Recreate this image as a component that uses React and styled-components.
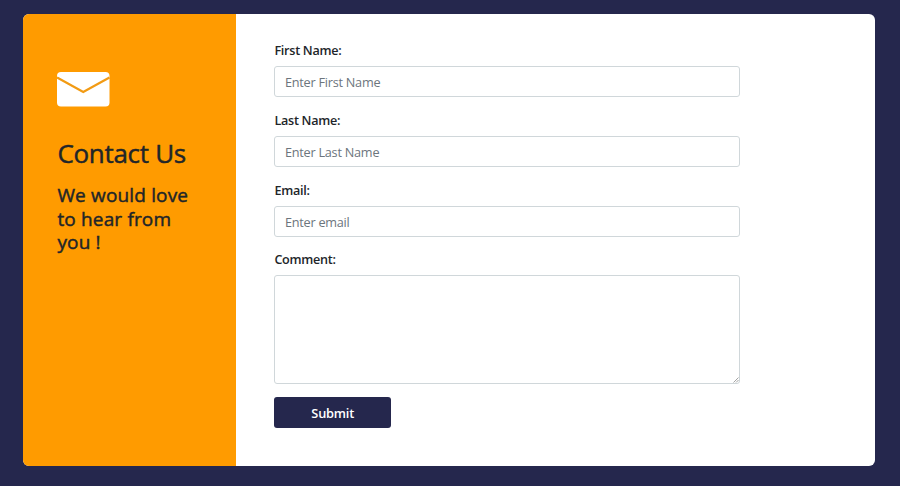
import React from "react";
import styled, { createGlobalStyle } from "styled-components";

const GlobalStyle = createGlobalStyle`
  *, *::before, *::after { box-sizing: border-box; }
  body {
    margin: 0;
    background: #25274d;
    font-family: "Open Sans", "Noto Sans", sans-serif;
    color: #212529;
    overflow: hidden;
  }
`;

const Page = styled.main`
  height: 486px;
  padding: 14px 25px 20px 23.4px;
  background: #25274d;
`;

const Card = styled.section`
  display: grid;
  grid-template-columns: 213px 1fr;
  height: 452px;
  border-radius: 6px;
  overflow: hidden;
  background: #fff;
`;

const Aside = styled.aside`
  padding: 58px 34px 0;
  background: #ff9b00;
`;

const Envelope = styled.svg`
  display: block;
  width: 52.5px;
  height: 35px;
`;

const Title = styled.h2`
  margin: 29px 0 0;
  font-size: 26px;
  line-height: 34px;
  font-weight: 400;
  letter-spacing: -0.3px;
  -webkit-text-stroke: 0.45px currentColor;
  white-space: nowrap;
`;

const Tagline = styled.h4`
  margin: 14px 0 0;
  font-size: 19px;
  line-height: 23.5px;
  font-weight: 400;
  letter-spacing: 0.16px;
  -webkit-text-stroke: 0.45px currentColor;
  white-space: nowrap;
`;

const Form = styled.form`
  display: flex;
  flex-direction: column;
  align-items: flex-start;
  width: 504px;
  padding: 27px 0 0 38px;
`;

const Field = styled.div`
  position: relative;
  display: flex;
  flex-direction: column;
  width: 465.6px;
  height: ${({ $height }) => $height || 69.8}px;
`;

const Label = styled.label`
  height: 25px;
  font-size: 12.6px;
  line-height: 19px;
  font-weight: 600;
  letter-spacing: -0.26px;
`;

const Input = styled.input`
  width: 100%;
  height: 31px;
  padding: 1px 9.5px 0;
  border: 1px solid #d0d7da;
  border-radius: 3px;
  background: #fff;
  font: 400 12.7px "Open Sans", sans-serif;
  letter-spacing: -0.24px;
  outline: none;
  &::placeholder { color: #6c757d; opacity: 1; }
`;

const Textarea = styled.textarea`
  width: 100%;
  height: 109px;
  padding: 6px 10px;
  border: 1px solid #d0d7da;
  border-radius: 3px;
  resize: none;
  font: 400 12.7px "Open Sans", sans-serif;
  outline: none;
`;

const Grip = styled.svg`
  position: absolute;
  right: 1px;
  top: 127px;
  width: 6px;
  height: 6px;
  pointer-events: none;
`;

const Submit = styled.button`
  width: 116.6px;
  height: 31.4px;
  padding: 1px 0 0;
  border: 0;
  border-radius: 3px;
  background: #25274d;
  color: #fff;
  font: 600 12.8px "Open Sans", sans-serif;
  letter-spacing: -0.2px;
`;

const fields = [
  { id: "first", label: "First Name:", placeholder: "Enter First Name" },
  { id: "last", label: "Last Name:", placeholder: "Enter Last Name" },
  { id: "email", label: "Email:", placeholder: "Enter email" },
];

export default function App() {
  return (
    <Page>
      <GlobalStyle />
      <Card>
        <Aside>
          <Envelope viewBox="0 0 52.5 35" aria-hidden="true">
            <rect width="52.5" height="34.6" rx="4" fill="#fff" />
            <path d="M0 5.5 L26.25 20 L52.5 5.5" fill="none" stroke="#f29b14" strokeWidth="2.4" />
          </Envelope>
          <Title>Contact Us</Title>
          <Tagline>We would love<br />to hear from<br />you !</Tagline>
        </Aside>
        <Form onSubmit={(e) => e.preventDefault()}>
          {fields.map((f) => (
            <Field key={f.id}>
              <Label htmlFor={f.id}>{f.label}</Label>
              <Input id={f.id} placeholder={f.placeholder} />
            </Field>
          ))}
          <Field $height={146.4}>
            <Label htmlFor="comment">Comment:</Label>
            <Textarea id="comment" />
            <Grip viewBox="0 0 6 6" aria-hidden="true">
              <path d="M0.5 5.5 L5.5 0.5 M3 5.5 L5.5 3" stroke="#8b8b8b" strokeWidth="0.8" />
            </Grip>
          </Field>
          <Submit type="submit">Submit</Submit>
        </Form>
      </Card>
    </Page>
  );
}
